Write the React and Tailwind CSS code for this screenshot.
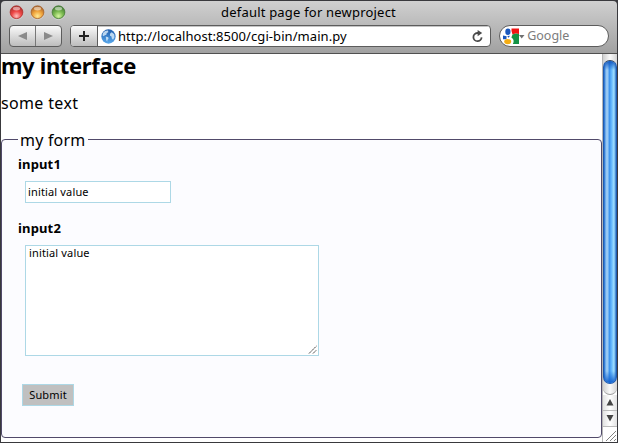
function TrafficLight({ id, dark, mid, light }) {
  return (
    <svg width="15" height="15" viewBox="0 0 15 15">
      <defs>
        <radialGradient id={id} cx="0.5" cy="0.8" r="0.75">
          <stop offset="0" stopColor={light} />
          <stop offset="0.5" stopColor={mid} />
          <stop offset="1" stopColor={dark} />
        </radialGradient>
      </defs>
      <circle cx="7.5" cy="8" r="7" fill="#ddd" opacity="0.6" />
      <circle cx="7.5" cy="7.2" r="6.4" fill={`url(#${id})`} stroke={dark} strokeWidth="0.8" />
      <ellipse cx="7.5" cy="3.6" rx="3.6" ry="1.9" fill="#fff" opacity="0.5" />
    </svg>
  );
}

function Globe() {
  return (
    <svg width="15" height="15" viewBox="0 0 14 14">
      <defs>
        <linearGradient id="globe" x1="0" y1="0" x2="0" y2="1">
          <stop offset="0" stopColor="#1f5cab" />
          <stop offset="1" stopColor="#5aa9ec" />
        </linearGradient>
      </defs>
      <circle cx="7" cy="7" r="6.7" fill="url(#globe)" />
      <path d="M2 3.4 Q4 1.2 6.6 1.5 L6.8 3 5.4 3.8 5 5.4 3.6 5.8 2.4 6.8 1.4 5.8Z" fill="#d2e7f9" opacity="0.85" />
      <path d="M4.4 7 L6.8 7.6 7 9 6 10.2 5.8 12 4.9 10.6Z" fill="#d2e7f9" opacity="0.85" />
      <path d="M8.4 4.4 L10 3 12.3 5 12.6 7.6 11.2 10 10 8.6 9.8 7 8.4 6.2Z" fill="#d2e7f9" opacity="0.85" />
    </svg>
  );
}

function TitleBar() {
  return (
    <div className="grid h-[23px] grid-cols-[1fr_auto_1fr] items-center pl-[8px] pr-[9px]">
      <div className="flex gap-[6px]">
        <TrafficLight id="red" dark="#a92f2c" mid="#ee4746" light="#ffc4c0" />
        <TrafficLight id="amber" dark="#a5612a" mid="#f0a43c" light="#ffeb96" />
        <TrafficLight id="green" dark="#447a35" mid="#79b84f" light="#d6f7a0" />
      </div>
      <h1 className="pb-[2px] text-[13px] leading-[20px] tracking-[0.2px]">default page for newproject</h1>
      <span />
    </div>
  );
}

const buttonFace = "bg-linear-to-b from-[#fafafa] to-[#bdbdbd]";

function Toolbar() {
  return (
    <div className="flex h-[29px] items-start pl-[8px] pr-[8px] pt-px">
      <div className={`flex h-[22px] w-[53px] rounded-[4px] border border-[#5c5c5c] ${buttonFace}`}>
        <button className="flex flex-1 items-center justify-center border-r border-[#777]">
          <svg width="9" height="8" viewBox="0 0 9 8"><path d="M0 4 9 0V8Z" fill="#8a8a8a" /></svg>
        </button>
        <button className="flex flex-1 items-center justify-center">
          <svg width="9" height="8" viewBox="0 0 9 8"><path d="M9 4 0 0V8Z" fill="#8a8a8a" /></svg>
        </button>
      </div>
      <div className="ml-[8px] flex h-[22px] w-[422px] overflow-hidden rounded-[4px] border border-[#5c5c5c] bg-white">
        <button className={`flex w-[27px] items-center justify-center border-r border-[#5c5c5c] ${buttonFace}`}>
          <svg width="10" height="10" viewBox="0 0 10 10"><path d="M5 0V10M0 5H10" stroke="#222" strokeWidth="2" /></svg>
        </button>
        <div className="flex flex-1 items-center border-t border-[#c4c4c4] pl-[3px] pr-[7px]">
          <Globe />
          <span className="ml-[2px] pb-[2px] text-[13px] leading-[18px] tracking-[0.07px]">http://localhost:8500/cgi-bin/main.py</span>
          <svg className="ml-auto" width="11" height="13" viewBox="0 0 11 13">
            <path d="M6 3H5.3A4.1 4.1 0 1 0 9.6 7.4" fill="none" stroke="#4a4a4a" strokeWidth="1.8" />
            <path d="M5.6 0 10.2 3.1 5.6 6.2Z" fill="#4a4a4a" />
          </svg>
        </div>
      </div>
      <div className="ml-[8px] flex h-[22px] w-[110px] items-center rounded-full border border-[#5c5c5c] bg-white pl-[3px]">
        <svg width="22" height="17" viewBox="0 0 22 17">
          <path d="M8.5 0.5H16V6L12.5 5.6 9.5 6.4 8.5 3Z" fill="#f01414" />
          <path d="M9.5 6.4 12.5 5.6 16 6V16H9.8Q11.6 13 9.6 10.6L8.4 9.4Z" fill="#139244" />
          <path d="M0 7.5 3.6 8.3 3.4 11.2H0Z" fill="#1957bd" />
          <ellipse cx="4.9" cy="3.8" rx="2.6" ry="3.2" fill="#1957bd" />
          <path d="M4.2 8 7 7.8 5.6 9.8Z" fill="#1957bd" />
          <ellipse cx="4.7" cy="13.6" rx="3.5" ry="2.6" fill="#f4ac13" />
          <path d="M16 7H21.5L18.7 10.5Z" fill="#707070" />
        </svg>
        <span className="ml-[2px] text-[12.5px] leading-[18px] text-[#7c7c7c]">Google</span>
      </div>
    </div>
  );
}

function Scrollbar() {
  return (
    <div className="flex w-[15px] shrink-0 flex-col border-l border-[#b5b5b5] bg-white">
      <div className="flex h-[341px] flex-col rounded-b-[7px] border-b border-[#999] bg-linear-to-r from-[#d0d0d0] via-[#fafafa] to-[#d4d4d4] pt-[6px]">
        <div className="h-[324px] overflow-hidden rounded-[7px] border border-[#1f5aaf] border-t-[#34465f] bg-[linear-gradient(to_right,#1668ce_0%,#95c6f3_18%,#9acbf5_32%,#3b91ed_44%,#62b6fc_62%,#a1e1ff_83%,#2f75c8_100%)]">
          <div className="h-full bg-[linear-gradient(to_bottom,#1259c1_0px,transparent_9px,transparent_310px,#1462cf_322px)]" />
        </div>
      </div>
      <button className="flex h-[15px] items-center justify-center bg-linear-to-r from-[#e2e2e2] via-white to-[#e2e2e2]">
        <svg width="8" height="7" viewBox="0 0 8 7"><path d="M4 0 7.5 6.5H.5Z" fill="#454545" /></svg>
      </button>
      <button className="flex h-[17px] items-center justify-center border-y border-[#bbb] bg-linear-to-r from-[#e2e2e2] via-white to-[#e2e2e2]">
        <svg width="8" height="7" viewBox="0 0 8 7"><path d="M4 6.5 7.5 0H.5Z" fill="#454545" /></svg>
      </button>
      <svg width="14" height="15" viewBox="0 0 14 15">
        <path d="M3 14 13 4M7 14 13 8M11 14 13 12" stroke="#828282" />
      </svg>
    </div>
  );
}

function Page() {
  return (
    <main className="flex flex-1 flex-col bg-white">
      <h2 className="h-[40px] text-[22px] font-bold leading-[23px] tracking-[-0.35px]">my interface</h2>
      <p className="h-[35px] text-[16px] leading-[18px] tracking-[0.35px]">some text</p>
      <fieldset className="h-[309px] rounded-[4px] border border-[#514a6a] bg-[#fcfcff] pl-[16px]">
        <legend className="h-[20px] pl-[2px] pr-[3px] text-[16px] leading-[22px] tracking-[0.2px]">my form</legend>
        <label className="block h-[32px] pt-[6px] text-[13px] font-bold leading-[18px] tracking-[0.15px]">input1</label>
        <input
          className="ml-[7px] block h-[22px] w-[146px] border border-[#add8e6] bg-white pb-[2px] pl-[2px] text-[11px] tracking-[0.15px]"
          defaultValue="initial value"
        />
        <label className="mt-[16px] block h-[26px] text-[13px] font-bold leading-[18px] tracking-[0.15px]">input2</label>
        <div className="ml-[7px] flex h-[111px] w-[294px] border border-[#add8e6] bg-white">
          <textarea
            className="block flex-1 resize-none pl-[3px] text-[11px] leading-[14px] tracking-[0.15px]"
            defaultValue="initial value"
          />
          <svg className="self-end" width="10" height="10" viewBox="0 0 10 10">
            <path d="M1 8.5 8.5 1M5 8.5 8.5 5" stroke="#444" strokeDasharray="2 .5" />
          </svg>
        </div>
        <button className="ml-[4px] mt-[28px] block h-[22px] w-[52px] border border-[#add8e6] bg-[#c0c0c0] text-[11px] tracking-[0.15px]">
          Submit
        </button>
      </fieldset>
    </main>
  );
}

export default function App() {
  return (
    <div className="h-[443px] w-[618px] overflow-hidden bg-[#39393d] px-px pt-px font-['Noto_Sans','Open_Sans',sans-serif] text-black">
      <header className="h-[53px] rounded-t-[4px] border-b border-[#505050] bg-linear-to-b from-[#d0d0d0] to-[#a1a1a1]">
        <TitleBar />
        <Toolbar />
      </header>
      <div className="flex h-[388px] bg-white">
        <Page />
        <Scrollbar />
      </div>
    </div>
  );
}
